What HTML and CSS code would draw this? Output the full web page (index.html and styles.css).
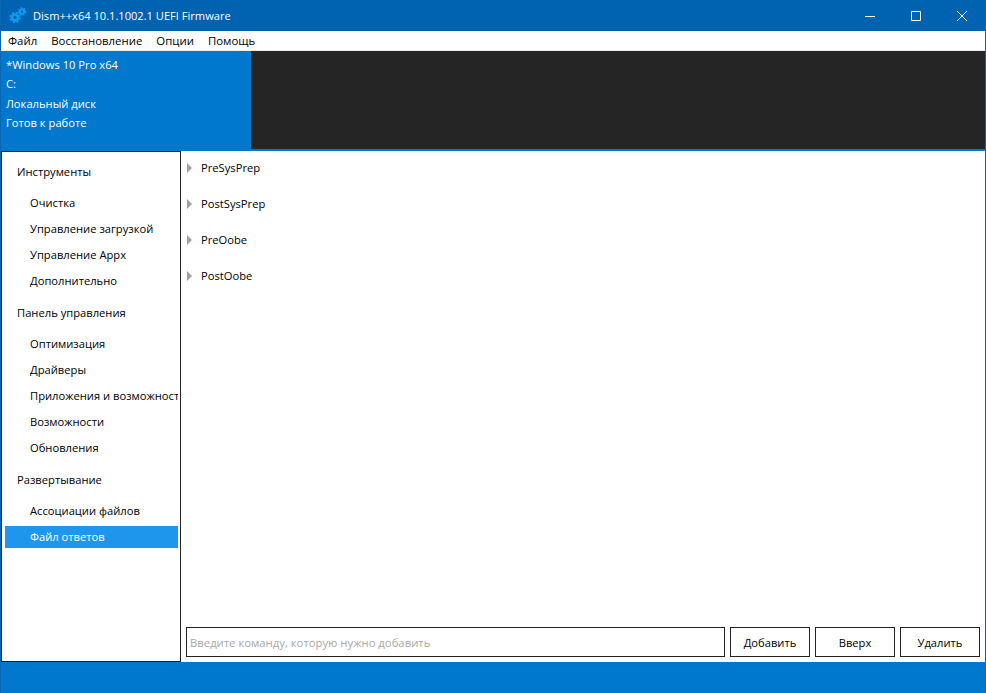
FILE: index.html
```html
<!DOCTYPE html>
<html lang="ru">
<head>
<meta charset="utf-8">
<title>Dism++</title>
<link rel="stylesheet" href="styles.css">
</head>
<body>
<div class="window">
  <header class="titlebar">
    <svg class="app-icon" width="20" height="20" viewBox="0 0 20 20"><g fill="none" stroke="#129aee"><circle cx="6" cy="11.5" r="3" stroke-width="2.6"/><circle cx="6" cy="11.5" r="4.9" stroke-width="1.6" stroke-dasharray="2.2 1.65"/><circle cx="13" cy="5.5" r="2.2" stroke-width="2"/><circle cx="13" cy="5.5" r="3.6" stroke-width="1.4" stroke-dasharray="1.6 1.43"/></g></svg>
    <span class="title">Dism++x64 10.1.1002.1 UEFI Firmware</span>
    <div class="controls">
      <span class="ctl"><svg width="10" height="10" viewBox="0 0 10 10"><path d="M0 5.5h10" stroke="#fff" fill="none"/></svg></span>
      <span class="ctl"><svg width="10" height="10" viewBox="0 0 10 10"><path d="M.5.5h9v9h-9z" stroke="#fff" fill="none"/></svg></span>
      <span class="ctl"><svg width="10" height="10" viewBox="0 0 10 10"><path d="M0 0l10 10M10 0L0 10" stroke="#fff" fill="none"/></svg></span>
    </div>
  </header>
  <nav class="menu"><span>Файл</span><span>Восстановление</span><span>Опции</span><span>Помощь</span></nav>
  <section class="info">
    <div class="info-text">
      <div>*Windows 10 Pro x64</div>
      <div>C:</div>
      <div>Локальный диск</div>
      <div>Готов к работе</div>
    </div>
    <div class="info-dark"></div>
  </section>
  <main class="main">
    <aside class="sidebar">
      <div class="group">Инструменты</div>
      <div class="item">Очистка</div>
      <div class="item">Управление загрузкой</div>
      <div class="item">Управление Appx</div>
      <div class="item">Дополнительно</div>
      <div class="group">Панель управления</div>
      <div class="item">Оптимизация</div>
      <div class="item">Драйверы</div>
      <div class="item">Приложения и возможности</div>
      <div class="item">Возможности</div>
      <div class="item">Обновления</div>
      <div class="group">Развертывание</div>
      <div class="item">Ассоциации файлов</div>
      <div class="item active">Файл ответов</div>
    </aside>
    <section class="content">
      <div class="tree">
        <div class="node"><i class="arrow"></i>PreSysPrep</div>
        <div class="node"><i class="arrow"></i>PostSysPrep</div>
        <div class="node"><i class="arrow"></i>PreOobe</div>
        <div class="node"><i class="arrow"></i>PostOobe</div>
      </div>
      <div class="actions">
        <input class="command" type="text" placeholder="Введите команду, которую нужно добавить">
        <button class="btn">Добавить</button>
        <button class="btn">Вверх</button>
        <button class="btn">Удалить</button>
      </div>
    </section>
  </main>
  <footer class="status"></footer>
</div>
</body>
</html>
```
FILE: styles.css
```css
* { box-sizing: border-box; }
html, body { margin: 0; padding: 0; height: 100%; overflow: hidden; }
body { font-family: "Open Sans", "Noto Sans", sans-serif; font-size: 11.2px; color: #000; }
.window { width: 986px; height: 693px; display: flex; flex-direction: column; border: 1px solid #0a66b0; border-top: 0; border-bottom: 0; background: #0078cd; }
.titlebar { height: 31px; flex: none; background: #0063b1; color: #fff; display: flex; align-items: center; padding-left: 8px; }
.app-icon { flex: none; margin-right: 4px; }
.title { flex: 1; font-size: 11.1px; }
.controls { display: flex; height: 31px; }
.ctl { width: 46px; display: flex; align-items: center; justify-content: center; }
.menu { height: 20px; flex: none; background: #fff; border-bottom: 1px solid #eee; display: flex; align-items: center; padding-left: 7px; gap: 14px; font-size: 11.4px; }
.info { height: 98px; flex: none; display: flex; background: #0078cd; color: #fff; }
.info-text { width: 250px; padding: 4px 0 0 5px; line-height: 19.3px; }
.info-dark { flex: 1; background: #252525; }
.main { flex: 1; min-height: 0; display: flex; margin-top: 2px; background: #fff; }
.sidebar { width: 180px; flex: none; background: #fff; border: 1px solid #222; padding: 7px 2px 0 3px; overflow: hidden; }
.group { height: 26px; line-height: 26px; margin-bottom: 7px; padding-left: 12px; white-space: nowrap; }
.group:not(:first-child) { margin-top: 8px; }
.item { height: 22px; line-height: 22px; margin-bottom: 4px; padding-left: 25px; white-space: nowrap; overflow: hidden; }
.active { background: #1e96ec; color: #fff; }
.content { flex: 1; min-width: 0; display: flex; flex-direction: column; padding: 0 5px 5px 5px; }
.tree { flex: 1; }
.node { height: 36px; display: flex; align-items: center; gap: 9px; padding: 0 0 3px 1px; }
.arrow { width: 0; height: 0; border-left: 5px solid #a0a0a0; border-top: 5px solid transparent; border-bottom: 5px solid transparent; }
.actions { display: flex; gap: 5px; height: 30px; }
.command { flex: 1; min-width: 0; height: 30px; border: 1px solid #222; padding: 0 3px; font: inherit; font-size: 11.3px; outline: 0; border-radius: 0; background: #fff; }
.command::placeholder { color: #a8a8a8; opacity: 1; }
.btn { width: 80px; height: 30px; flex: none; border: 1px solid #222; background: #fff; color: #000; font: inherit; padding: 0; border-radius: 0; }
.status { height: 31px; flex: none; background: #0078cd; }
```
